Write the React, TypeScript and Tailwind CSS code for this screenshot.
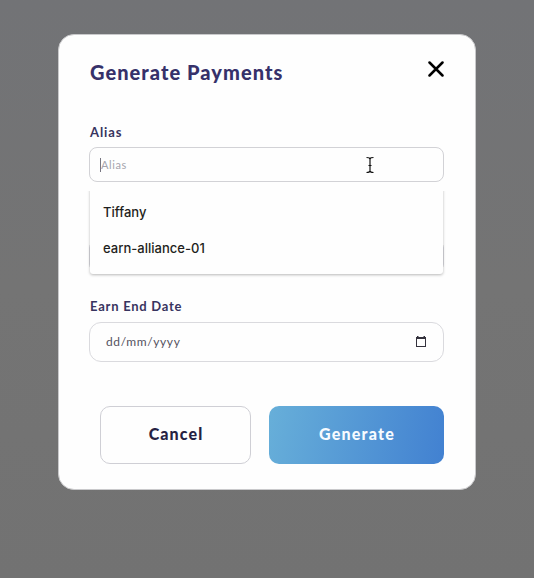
import React from "react";

const SUGGESTIONS = ["Tiffany", "earn-alliance-01"];

function CloseIcon() {
  return (
    <svg width="16" height="16" viewBox="0 0 16 16" fill="none" stroke="#000" strokeWidth="2.5" strokeLinecap="round">
      <path d="M1.5 1.5 14.5 14.5M14.5 1.5 1.5 14.5" />
    </svg>
  );
}

function CalendarIcon() {
  return (
    <svg className="-mt-px" width="10" height="11" viewBox="0 0 10 11" fill="none">
      <path d="M1 0h1.5v1h5V0H9v1h1v10H0V1h1zM1 3V10h8V3z" fill="#34323d" fillRule="evenodd" />
    </svg>
  );
}

function TextCursor() {
  return (
    <svg className="absolute left-[275px] top-[8px]" width="10" height="18" viewBox="0 0 10 18" fill="none" stroke="#111" strokeWidth="1.2">
      <path d="M1.5 1.5C3.5 1.5 5 2 5 3.2 5 2 6.5 1.5 8.5 1.5M5 3v12M1.5 16.5C3.5 16.5 5 16 5 14.8 5 16 6.5 16.5 8.5 16.5M3.5 9.5h3" />
    </svg>
  );
}

export default function App() {
  return (
    <div className="flex h-[578px] w-[534px] flex-col overflow-hidden bg-linear-to-b from-[#727376] via-[#747474] to-[#727272] pt-[34px] pl-[58px] font-['Lato','Liberation_Sans',sans-serif]">
      <div className="flex h-[456px] w-[418px] flex-col rounded-[16px] border border-[#c9c9cb] bg-[#fefefe] px-[30px]">
        <header className="flex h-[65px] w-[356px] items-start justify-between pt-[24px]">
          <h1 className="pl-px text-[20px] leading-[26px] font-black tracking-[1.05px] text-[#36316a]">Generate Payments</h1>
          <button className="mt-[2px] mr-px" aria-label="Close"><CloseIcon /></button>
        </header>

        <label className="mt-[23px] h-[24px] pl-px text-[13px] leading-[18px] font-bold tracking-[0.9px] text-[#38345f]">Alias</label>
        <div className="relative flex h-[35px] w-[355px] shrink-0 items-center rounded-[8px] border border-[#d2d2d6] pl-[10px]">
          <span className="h-[14px] w-px bg-[#777681]" />
          <span className="pt-px text-[11px] leading-[16px] tracking-[0.6px] text-[#a5a4ad]">Alias</span>
          <TextCursor />
        </div>

        <div className="relative h-[93px] shrink-0">
          <div className="absolute top-[58px] left-0 h-[32px] w-[355px] rounded-[8px] border border-[#d6d6dc]" />
          <ul className="absolute top-[5px] left-[1px] flex h-[87px] w-[353px] flex-col rounded-[3px] bg-[#fefefe] pt-[7px] shadow-[0_1px_3px_rgba(0,0,0,0.28)] [clip-path:inset(4px_-4px_-5px_-4px)]">
            {SUGGESTIONS.map((name) => (
              <li key={name} className="flex h-[36px] items-center pl-[13px] font-['Inter','Liberation_Sans',sans-serif] text-[13px] leading-[18px] font-medium tracking-[0.02px] text-[#1e1e20]">
                {name}
              </li>
            ))}
          </ul>
        </div>

        <label className="mt-[22px] h-[25px] pl-px text-[13px] leading-[18px] font-bold tracking-[0.75px] text-[#38345f]">Earn End Date</label>
        <div className="flex h-[40px] w-[355px] shrink-0 items-center justify-between rounded-[12px] border border-[#dadade] pr-[17px] pl-[16px]">
          <span className="pb-px text-[12px] leading-[16px] tracking-[0.6px] text-[#54525e]">dd/mm/yyyy</span>
          <CalendarIcon />
        </div>

        <footer className="mt-[44px] flex w-[355px] justify-end gap-[18px]">
          <button className="h-[58px] w-[151px] rounded-[10px] border border-[#cfcfd5] pb-[2px] pl-px text-[16px] leading-[20px] font-black tracking-[1.1px] text-[#252142]">Cancel</button>
          <button className="h-[58px] w-[175px] rounded-[10px] bg-linear-[100deg] from-[#67afd9] to-[#4281d1] pb-[2px] pl-px text-[16px] leading-[20px] font-black tracking-[1.2px] text-[#f7fbff]">Generate</button>
        </footer>
      </div>
    </div>
  );
}
